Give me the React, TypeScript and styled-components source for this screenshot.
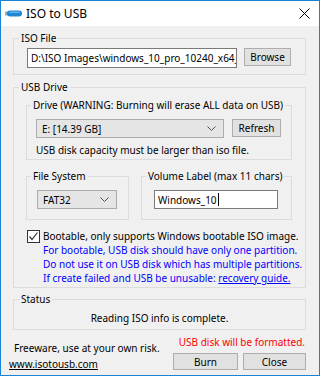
import React from "react";
import styled, { createGlobalStyle } from "styled-components";

const Global = createGlobalStyle`
  html, body { margin: 0; padding: 0; background: #ffffff; }
  body { font-family: "Noto Sans", "Segoe UI", sans-serif; }
  * { box-sizing: border-box; }
`;

const Window = styled.div`
  width: 320px;
  height: 376px;
  border: 1px solid #1883d7;
  display: flex;
  flex-direction: column;
  background: #f0f0f0;
  font-size: 10px;
  color: #000;
`;

const TitleBar = styled.div`
  height: 25px;
  flex: none;
  background: #fff;
  display: flex;
  align-items: center;
  padding-left: 4px;
  padding-right: 9px;
  font-size: 12px;
  gap: 4px;
`;

const Title = styled.span`
  flex: 1;
  line-height: 14px;
`;

const Body = styled.div`
  flex: 1;
  display: flex;
  flex-direction: column;
  padding: 0 13px 0 12px;
`;

const Group = styled.fieldset<{ $mt: number; $w?: number }>`
  margin: ${(p) => p.$mt}px 0 0 0;
  padding: 0;
  border: 1px solid #dcdcdc;
  min-width: 0;
  width: ${(p) => (p.$w ? `${p.$w}px` : "auto")};
  flex: none;
`;

const Legend = styled.legend<{ $ml: number }>`
  margin-left: ${(p) => p.$ml}px;
  padding: 0 2px;
  line-height: 12px;
  font-size: 10px;
`;

const Content = styled.div<{ $p: string }>`
  padding: ${(p) => p.$p};
  display: flex;
  flex-direction: column;
`;

const Row = styled.div<{ $gap: number }>`
  display: flex;
  align-items: flex-start;
  gap: ${(p) => p.$gap}px;
`;

const TextBox = styled.div<{ $w: number; $h: number }>`
  width: ${(p) => p.$w}px;
  height: ${(p) => p.$h}px;
  border: 1px solid #7a7a7a;
  background: #fff;
  padding: 0 0 0 3px;
  display: flex;
  align-items: center;
  overflow: hidden;
  white-space: nowrap;
  line-height: 12px;
  color: #000;
`;

const Caret = styled.span`
  display: inline-block;
  width: 1px;
  height: 13px;
  background: #000;
  margin-left: 1px;
`;

const Button = styled.button<{ $w: number; $h: number }>`
  width: ${(p) => p.$w}px;
  height: ${(p) => p.$h}px;
  border: 1px solid #adadad;
  background: #e1e1e1;
  padding: 0;
  margin: 0;
  font-family: inherit;
  font-size: 10px;
  color: #000;
  line-height: 1;
`;

const Combo = styled.div<{ $w: number; $h: number }>`
  width: ${(p) => p.$w}px;
  height: ${(p) => p.$h}px;
  border: 1px solid #acacac;
  background: #e5e5e5;
  display: flex;
  align-items: center;
  padding: 0 7px 0 5px;
  line-height: 12px;
`;

const ComboText = styled.span`
  flex: 1;
`;

const Note = styled.div<{ $mt: number }>`
  margin-top: ${(p) => p.$mt}px;
  line-height: 12px;
`;

const CheckRow = styled.label`
  margin-top: 9px;
  margin-left: 1px;
  display: flex;
  align-items: center;
  gap: 3px;
  line-height: 14px;
`;

const CheckBox = styled.span`
  width: 13px;
  height: 13px;
  border: 1px solid #333;
  background: #fff;
  display: flex;
  align-items: center;
  justify-content: center;
`;

const BlueText = styled.div`
  margin-left: 17px;
  color: #0000ff;
  line-height: 14px;
  padding-bottom: 2px;
`;

const BlueLink = styled.a`
  color: #0000ff;
  text-decoration: underline;
`;

const StatusText = styled.div`
  text-align: center;
  line-height: 14px;
  padding: 6px 0 4px;
`;

const Footer = styled.div`
  display: flex;
  align-items: flex-start;
`;

const FooterLeft = styled.div`
  display: flex;
  flex-direction: column;
  padding-left: 1px;
  padding-top: 11px;
  gap: 2px;
  line-height: 14px;
`;

const SiteLink = styled.a`
  margin-left: -5px;
  color: #000;
  text-decoration: underline;
`;

const FooterRight = styled.div`
  margin-left: auto;
  display: flex;
  flex-direction: column;
  align-items: flex-end;
  padding-top: 5px;
`;

const RedText = styled.div`
  color: #ff0000;
  line-height: 14px;
  margin-right: 1px;
`;

const ButtonRow = styled.div`
  display: flex;
  gap: 5px;
  margin-top: 4px;
`;

const Chevron = () => (
  <svg width="9" height="5" viewBox="0 0 9 5">
    <path d="M0.5 0.5 L4.5 4.5 L8.5 0.5" fill="none" stroke="#505050" strokeWidth="1" />
  </svg>
);

const UsbIcon = () => (
  <svg width="17" height="7" viewBox="0 0 17 7">
    <rect x="0" y="1.5" width="3" height="4" rx="1" fill="#8aa9c4" />
    <rect x="2" y="0.5" width="15" height="6" rx="3" fill="#1f86d2" />
    <rect x="4" y="1.5" width="11" height="1.5" rx="0.75" fill="#5fb2ec" />
  </svg>
);

const CloseIcon = () => (
  <svg width="11" height="11" viewBox="0 0 11 11">
    <path d="M0.5 0.5 L10.5 10.5 M10.5 0.5 L0.5 10.5" stroke="#000" strokeWidth="1" />
  </svg>
);

const Check = () => (
  <svg width="11" height="11" viewBox="0 0 11 11">
    <path d="M1.5 5.5 L4 8.5 L9.5 1.5" fill="none" stroke="#333" strokeWidth="1.2" />
  </svg>
);

export default function App() {
  return (
    <>
      <Global />
      <Window>
        <TitleBar>
          <UsbIcon />
          <Title>ISO to USB</Title>
          <CloseIcon />
        </TitleBar>
        <Body>
          <Group $mt={6}>
            <Legend $ml={5}>ISO File</Legend>
            <Content $p="4px 0 6px 13px">
              <Row $gap={7}>
                <TextBox $w={210} $h={20}>
                  D:\ISO Images\windows_10_pro_10240_x64_en-us.iso
                </TextBox>
                <Button $w={47} $h={18}>Browse</Button>
              </Row>
            </Content>
          </Group>

          <Group $mt={6}>
            <Legend $ml={5}>USB Drive</Legend>
            <Content $p="6px 0 0 12px">
              <Group $mt={0} $w={266}>
                <Legend $ml={4}>Drive (WARNING: Burning will erase ALL data on USB)</Legend>
                <Content $p="8px 0 3px 9px">
                  <Row $gap={8}>
                    <Combo $w={188} $h={19}>
                      <ComboText>E: [14.39 GB]</ComboText>
                      <Chevron />
                    </Combo>
                    <Button $w={49} $h={18}>Refresh</Button>
                  </Row>
                  <Note $mt={6}>USB disk capacity must be larger than iso file.</Note>
                </Content>
              </Group>

              <Row $gap={12} style={{ marginTop: 10 }}>
                <Group $mt={0} $w={103}>
                  <Legend $ml={4}>File System</Legend>
                  <Content $p="8px 0 10px 10px">
                    <Combo $w={80} $h={19}>
                      <ComboText>FAT32</ComboText>
                      <Chevron />
                    </Combo>
                  </Content>
                </Group>
                <Group $mt={0} $w={151}>
                  <Legend $ml={4}>Volume Label (max 11 chars)</Legend>
                  <Content $p="8px 0 10px 12px">
                    <TextBox $w={124} $h={19}>
                      Windows_10
                      <Caret />
                    </TextBox>
                  </Content>
                </Group>
              </Row>

              <CheckRow>
                <CheckBox>
                  <Check />
                </CheckBox>
                Bootable, only supports Windows bootable ISO image.
              </CheckRow>
              <BlueText>
                For bootable, USB disk should have only one partition.
                <br />
                Do not use it on USB disk which has multiple partitions.
                <br />
                If create failed and USB be unusable:{" "}
                <BlueLink href="#">recovery guide.</BlueLink>
              </BlueText>
            </Content>
          </Group>

          <Group $mt={5}>
            <Legend $ml={5}>Status</Legend>
            <StatusText>Reading ISO info is complete.</StatusText>
          </Group>

          <Footer>
            <FooterLeft>
              <span>Freeware, use at your own risk.</span>
              <SiteLink href="#">www.isotousb.com</SiteLink>
            </FooterLeft>
            <FooterRight>
              <RedText>USB disk will be formatted.</RedText>
              <ButtonRow>
                <Button $w={65} $h={17}>Burn</Button>
                <Button $w={63} $h={17}>Close</Button>
              </ButtonRow>
            </FooterRight>
          </Footer>
        </Body>
      </Window>
    </>
  );
}
